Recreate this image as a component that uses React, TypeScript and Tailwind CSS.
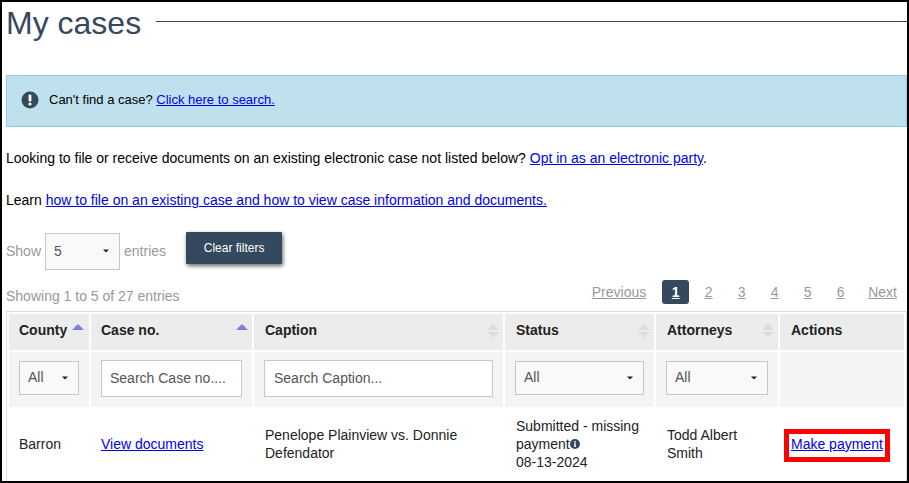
function Sort({ up, pos }: { up?: boolean; pos?: string }) {
  return (
    <svg width="12" height="16" viewBox="0 0 12 16" className={`absolute top-[9px] ${pos ?? "right-[4px]"}`}>
      <path d="M6 1 L12 7 H0 Z" fill={up ? "#7f7fe0" : "#dcdcdc"} />
      {up ? null : <path d="M0 9 H12 L6 15 Z" fill="#dcdcdc" />}
    </svg>
  );
}

function Caret() {
  return <span className="absolute right-[10px] top-1/2 -translate-y-1/2 w-0 h-0 border-x-[3px] border-x-transparent border-t-[3px] border-t-[#222]" />;
}

function Sel({ label, w }: { label: string; w: string }) {
  return (
    <div className={`relative h-[34px] bg-[#f9f9f9] border border-[#c8c8c8] pl-[8px] pb-[2px] flex items-center text-[#555] ${w}`}>
      {label}
      <Caret />
    </div>
  );
}

function Head({ label, up, noSort, pos, pad }: { label: string; up?: boolean; noSort?: boolean; pos?: string; pad?: string }) {
  return (
    <div className={`relative bg-[#ececec] h-[36px] flex items-center font-bold text-[#222] pb-[4px] ${pad ?? "pl-[11px]"}`}>
      {label}
      {noSort ? null : <Sort up={up} pos={pos} />}
    </div>
  );
}

function PageLink({ label }: { label: string }) {
  return <span className="underline text-[#999] w-[33px] text-center">{label}</span>;
}

export default function App() {
  return (
    <div className="w-[909px] h-[483px] overflow-hidden bg-white border-2 border-black text-[14px] leading-[18px] text-[#222] font-['Liberation_Sans',Arial,sans-serif] box-border pl-[4px]">
      <div className="flex items-center h-[40px] mt-px">
        <h1 className="text-[32px] leading-[40px] text-[#34495e] font-normal">My cases</h1>
        <div className="flex-1 h-px bg-[#34495e] ml-[15px] -mt-[4px]" />
      </div>

      <div className="mt-[32px] h-[52px] bg-[#bfe1ee] border border-[#8fcde3] flex items-center pl-[14px] w-[901px]">
        <div className="flex items-center -mt-[3px]">
          <svg width="18" height="18" viewBox="0 0 18 18" className="shrink-0">
            <circle cx="9" cy="9" r="8.5" fill="#34495e" />
            <rect x="7.6" y="3.5" width="2.8" height="7" rx="1" fill="#fff" />
            <circle cx="9" cy="13" r="1.6" fill="#fff" />
          </svg>
          <span className="ml-[10px] text-black text-[13px]">
            Can't find a case? <a className="underline text-[#0000ee]">Click here to search.</a>
          </span>
        </div>
      </div>

      <p className="mt-[22px] text-black">
        Looking to file or receive documents on an existing electronic case not listed below?{" "}
        <a className="underline text-[#0000ee]">Opt in as an electronic party</a>.
      </p>
      <p className="mt-[24px] text-black">
        Learn <a className="underline text-[#0000ee]">how to file on an existing case and how to view case information and documents.</a>
      </p>

      <div className="flex items-start mt-[23px] text-[#999] h-[38px]">
        <div className="flex items-center h-[38px]">
          <span>Show</span>
          <div className="relative w-[75px] h-[37px] ml-[4px] mr-[4px] bg-[#f9f9f9] border border-[#c8c8c8] pl-[8px] flex items-center text-[#555]">
            5
            <Caret />
          </div>
          <span>entries</span>
        </div>
        <div className="ml-[20px] w-[96px] h-[32px] bg-[#34495e] text-white text-[12px] flex items-center justify-center shadow-[1px_2px_4px_rgba(0,0,0,0.6)] rounded-[1px]">
          Clear filters
        </div>
      </div>

      <div className="flex items-center justify-between mt-[9px] h-[26px] text-[#999] w-[891px]">
        <span className="mt-[8px]">Showing 1 to 5 of 27 entries</span>
        <div className="flex items-center">
          <span className="underline mr-[16px]">Previous</span>
          <span className="w-[27px] h-[24px] bg-[#34495e] text-white font-bold underline rounded-[3px] flex items-center justify-center">1</span>
          <div className="flex ml-[3px]">
            {["2", "3", "4", "5", "6"].map((n) => (
              <PageLink key={n} label={n} />
            ))}
          </div>
          <span className="underline ml-[11px]">Next</span>
        </div>
      </div>

      <div className="w-[901px] border-x border-t border-[#ddd] mt-[6px] p-[2px] pb-0 grid grid-cols-[80px_161px_249px_149px_122px_124px] gap-x-[2px] gap-y-[2px]">
        <Head label="County" up pos="right-[5px]" pad="pl-[10px]" />
        <Head label="Case no." up pad="pl-[10px]" />
        <Head label="Caption" />
        <Head label="Status" />
        <Head label="Attorneys" />
        <Head label="Actions" noSort />

        <div className="h-[55px] bg-[#f4f4f4] flex items-center pl-[10px] pb-[3px]"><Sel label="All" w="w-[60px]" /></div>
        <div className="h-[55px] bg-[#f4f4f4] flex items-center pl-[10px] pb-[2px]">
          <div className="w-[141px] h-[37px] bg-white border border-[#c8c8c8] pl-[8px] pb-[2px] flex items-center text-[#555]">Search Case no....</div>
        </div>
        <div className="h-[55px] bg-[#f4f4f4] flex items-center pl-[10px] pb-[2px]">
          <div className="w-[229px] h-[37px] bg-white border border-[#c8c8c8] pl-[9px] pb-[2px] flex items-center text-[#555]">Search Caption...</div>
        </div>
        <div className="h-[55px] bg-[#f4f4f4] flex items-center pl-[10px] pb-[3px]"><Sel label="All" w="w-[129px]" /></div>
        <div className="h-[55px] bg-[#f4f4f4] flex items-center pl-[10px] pb-[3px]"><Sel label="All" w="w-[102px]" /></div>
        <div className="h-[55px] bg-[#f4f4f4]" />

        <div className="h-[74px] -mt-[2px] flex items-center pl-[10px]">Barron</div>
        <div className="h-[74px] -mt-[2px] flex items-center pl-[10px]"><a className="underline text-[#0000ee]">View documents</a></div>
        <div className="h-[74px] -mt-[2px] flex items-center pl-[11px]">Penelope Plainview vs. Donnie<br />Defendator</div>
        <div className="h-[74px] -mt-[2px] flex items-center pl-[11px]">
          <div>
            Submitted - missing<br />
            <span className="inline-flex items-center">
              payment
              <svg width="10" height="10" viewBox="0 0 10 10">
                <circle cx="5" cy="5" r="5" fill="#34495e" />
                <rect x="4.2" y="4.2" width="1.6" height="3.8" fill="#fff" />
                <rect x="4.2" y="2" width="1.6" height="1.5" fill="#fff" />
              </svg>
            </span>
            <br />08-13-2024
          </div>
        </div>
        <div className="h-[74px] -mt-[2px] flex items-center pl-[11px]">Todd Albert<br />Smith</div>
        <div className="h-[74px] -mt-[2px] flex items-center pl-[4px]">
          <div className="border-[5px] border-[#ff0000] pl-[2px] pr-[2px] pb-[3px] mt-[3px] h-[33px] flex items-center">
            <a className="underline text-[#0000ee]">Make payment</a>
          </div>
        </div>
      </div>
    </div>
  );
}
